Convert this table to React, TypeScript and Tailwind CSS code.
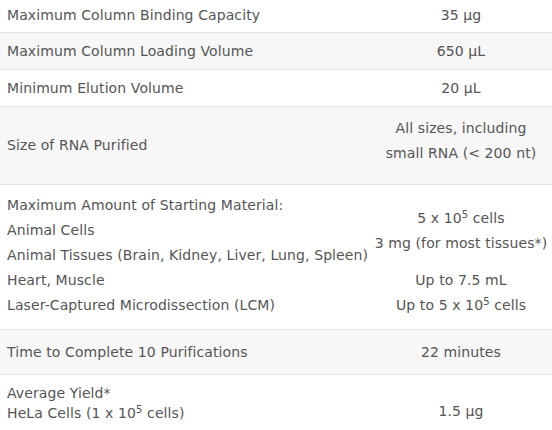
import React from "react";

const Sup = ({ children }: { children: React.ReactNode }) => (
  <sup className="text-[10px]">{children}</sup>
);

export default function App() {
  return (
    <div
      className="w-[552px] h-[430px] overflow-hidden bg-white text-[#555] text-[14px] tracking-[0.1px] whitespace-nowrap"
      style={{ fontFamily: '"DejaVu Sans", sans-serif' }}
    >
      <div className="flex h-[33px] items-center border-b border-[#e2e2e2] bg-white pb-[2px]">
        <div className="w-[370px] pl-[7px]">Maximum Column Binding Capacity</div>
        <div className="flex-1 text-center">35 µg</div>
      </div>
      <div className="flex h-[37px] items-center border-b border-[#e2e2e2] bg-[#f7f7f7]">
        <div className="w-[370px] pl-[7px]">Maximum Column Loading Volume</div>
        <div className="flex-1 text-center">650 µL</div>
      </div>
      <div className="flex h-[37px] items-center border-b border-[#e2e2e2] bg-white">
        <div className="w-[370px] pl-[7px]">Minimum Elution Volume</div>
        <div className="flex-1 text-center">20 µL</div>
      </div>
      <div className="flex h-[78px] items-center border-b border-[#e2e2e2] bg-[#f7f7f7]">
        <div className="w-[370px] pl-[7px]">Size of RNA Purified</div>
        <div className="flex-1 text-center leading-[25px] pb-[10px]">
          <div>All sizes, including</div>
          <div>small RNA (&lt; 200 nt)</div>
        </div>
      </div>
      <div className="flex h-[145px] items-start border-b border-[#e2e2e2] bg-white">
        <div className="w-[370px] pl-[7px] pt-[8px] leading-[25px]">
          <div>Maximum Amount of Starting Material:</div>
          <div>Animal Cells</div>
          <div>Animal Tissues (Brain, Kidney, Liver, Lung, Spleen)</div>
          <div>Heart, Muscle</div>
          <div>Laser-Captured Microdissection (LCM)</div>
        </div>
        <div className="flex-1 text-center pt-[21px] leading-[25px]">
          <div>
            5 x 10<Sup>5</Sup> cells
          </div>
          <div>3 mg (for most tissues*)</div>
          <div className="mt-[12px]">Up to 7.5 mL</div>
          <div>
            Up to 5 x 10<Sup>5</Sup> cells
          </div>
        </div>
      </div>
      <div className="flex h-[45px] items-center border-b border-[#e2e2e2] bg-[#f7f7f7]">
        <div className="w-[370px] pl-[7px]">Time to Complete 10 Purifications</div>
        <div className="flex-1 text-center">22 minutes</div>
      </div>
      <div className="flex items-start bg-white">
        <div className="w-[370px] pl-[7px] pt-[8px] leading-[20px]">
          <div>Average Yield*</div>
          <div>
            HeLa Cells (1 x 10<Sup>5</Sup> cells)
          </div>
        </div>
        <div className="flex-1 text-center pt-[26px] leading-[20px]">1.5 µg</div>
      </div>
    </div>
  );
}
